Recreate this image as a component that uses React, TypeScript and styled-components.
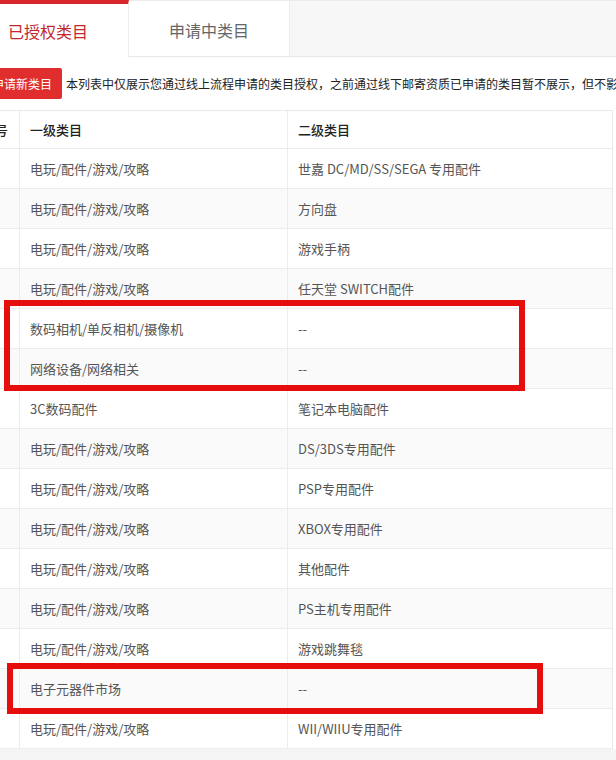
import React from "react";
import styled, { createGlobalStyle } from "styled-components";

const Global = createGlobalStyle`
  html, body { margin: 0; padding: 0; background: #f5f5f5; overflow: hidden; }
  body { font-family: "Noto Sans CJK SC", "Microsoft YaHei", sans-serif; }
  * { box-sizing: border-box; }
`;

const Root = styled.div`
  position: relative;
  width: 616px;
  height: 760px;
  overflow: hidden;
`;

const Page = styled.div`
  margin-left: -32px;
  width: 648px;
  background: #fff;
`;

const TabBar = styled.div`
  display: flex;
  height: 57px;
  background: #f7f7f7;
  border-top: 1px solid #ececec;
  border-bottom: 1px solid #e8e8e8;
`;

const Tab = styled.div<{ $active?: boolean }>`
  width: 161px;
  margin-top: ${(p) => (p.$active ? "-1px" : "0")};
  height: ${(p) => (p.$active ? "57px" : "55px")};
  padding-top: ${(p) => (p.$active ? "0" : "3px")};
  display: flex;
  align-items: center;
  justify-content: center;
  font-size: 16px;
  background: #fff;
  color: ${(p) => (p.$active ? "#c1272d" : "#666")};
  border-top: ${(p) => (p.$active ? "4px solid #d8262c" : "none")};
  border-right: 1px solid #ececec;
`;

const Content = styled.div`
  padding-left: 2px;
`;

const Toolbar = styled.div`
  display: flex;
  align-items: center;
  gap: 4px;
  padding: 11px 0 11px 12px;
  white-space: nowrap;
`;

const AddButton = styled.button`
  flex: none;
  height: 31px;
  padding: 0 10px;
  border: none;
  border-radius: 2px;
  background: #e02e2e;
  color: #fff;
  font-family: inherit;
  font-size: 12px;
  line-height: 31px;
`;

const Notice = styled.span`
  font-size: 12px;
  color: #222;
`;

const Table = styled.div`
  width: 643px;
  border-top: 1px solid #e8e8e8;
  border-left: 1px solid #e8e8e8;
  border-right: 1px solid #e8e8e8;
`;

const Row = styled.div<{ $striped?: boolean; $head?: boolean }>`
  display: grid;
  grid-template-columns: 48px 268px 1fr;
  height: ${(p) => (p.$head ? "38px" : "40px")};
  background: ${(p) => (p.$striped ? "#fafafa" : "#fff")};
  border-bottom: 1px solid #ececec;
  font-size: 13px;
  color: ${(p) => (p.$head ? "#222" : "#555")};
  font-weight: ${(p) => (p.$head ? 500 : 400)};
`;

const Cell = styled.div`
  display: flex;
  align-items: center;
  padding-left: 11px;
  white-space: nowrap;
  overflow: hidden;
  & + & { border-left: 1px solid #ececec; padding-left: 10px; }
`;

const Mark = styled.div<{ $x: number; $y: number; $w: number; $h: number }>`
  position: absolute;
  left: ${(p) => p.$x}px;
  top: ${(p) => p.$y}px;
  width: ${(p) => p.$w}px;
  height: ${(p) => p.$h}px;
  border: 6px solid #e60d0d;
  pointer-events: none;
`;

const G = "电玩/配件/游戏/攻略";
const rows: [string, string][] = [
  [G, "世嘉 DC/MD/SS/SEGA 专用配件"],
  [G, "方向盘"],
  [G, "游戏手柄"],
  [G, "任天堂 SWITCH配件"],
  ["数码相机/单反相机/摄像机", "--"],
  ["网络设备/网络相关", "--"],
  ["3C数码配件", "笔记本电脑配件"],
  [G, "DS/3DS专用配件"],
  [G, "PSP专用配件"],
  [G, "XBOX专用配件"],
  [G, "其他配件"],
  [G, "PS主机专用配件"],
  [G, "游戏跳舞毯"],
  ["电子元器件市场", "--"],
  [G, "WII/WIIU专用配件"],
];

export default function App() {
  return (
    <Root>
      <Global />
      <Page>
        <TabBar>
          <Tab $active>已授权类目</Tab>
          <Tab>申请中类目</Tab>
        </TabBar>
        <Content>
          <Toolbar>
            <AddButton>申请新类目</AddButton>
            <Notice>
              本列表中仅展示您通过线上流程申请的类目授权，之前通过线下邮寄资质已申请的类目暂不展示，但不影响您正常发布商品。
            </Notice>
          </Toolbar>
          <Table>
            <Row $head>
              <Cell>序号</Cell>
              <Cell>一级类目</Cell>
              <Cell>二级类目</Cell>
            </Row>
            {rows.map(([a, b], i) => (
              <Row key={i} $striped={i % 2 === 1}>
                <Cell>{i + 1}</Cell>
                <Cell>{a}</Cell>
                <Cell>{b}</Cell>
              </Row>
            ))}
          </Table>
        </Content>
      </Page>
      <Mark $x={4} $y={300} $w={521} $h={91} />
      <Mark $x={7} $y={663} $w={536} $h={51} />
    </Root>
  );
}
